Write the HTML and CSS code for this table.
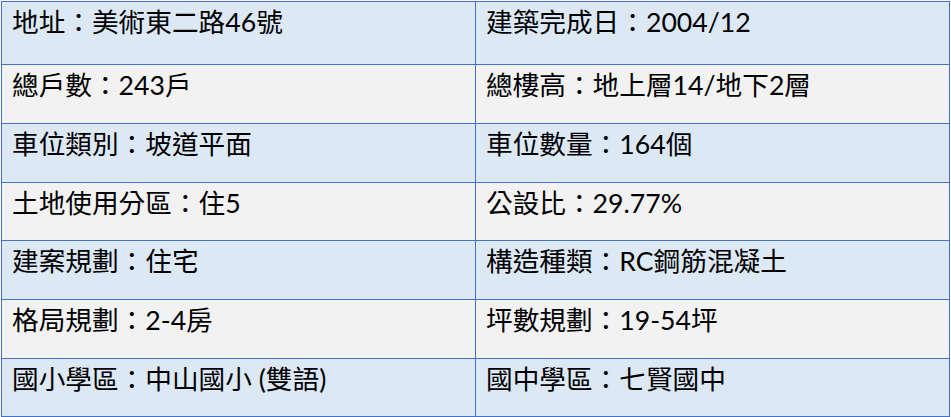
FILE: index.html
```html
<!DOCTYPE html>
<html lang="zh-Hant">
<head>
<meta charset="utf-8">
<title>建案資訊</title>
<link rel="stylesheet" href="styles.css">
</head>
<body>
<table class="info">
  <tr class="row row-blue row-first">
    <td class="cell">地址：美術東二路46號</td>
    <td class="cell">建築完成日：2004/12</td>
  </tr>
  <tr class="row row-gray">
    <td class="cell">總戶數：243戶</td>
    <td class="cell">總樓高：地上層14/地下2層</td>
  </tr>
  <tr class="row row-blue">
    <td class="cell">車位類別：坡道平面</td>
    <td class="cell">車位數量：164個</td>
  </tr>
  <tr class="row row-gray row-short">
    <td class="cell">土地使用分區：住5</td>
    <td class="cell">公設比：29.77%</td>
  </tr>
  <tr class="row row-blue">
    <td class="cell">建案規劃：住宅</td>
    <td class="cell">構造種類：RC鋼筋混凝土</td>
  </tr>
  <tr class="row row-gray">
    <td class="cell">格局規劃：2-4房</td>
    <td class="cell">坪數規劃：19-54坪</td>
  </tr>
  <tr class="row row-blue row-short">
    <td class="cell">國小學區：中山國小 (雙語)</td>
    <td class="cell">國中學區：七賢國中</td>
  </tr>
</table>
</body>
</html>
```

FILE: styles.css
```css
html, body {
  margin: 0;
  padding: 0;
  background: #ffffff;
}

body {
  padding: 1px 0 0 1px;
}

.info {
  border-collapse: collapse;
  width: 949px;
  table-layout: fixed;
  font-family: "Lato", "Noto Sans CJK TC", sans-serif;
  font-size: 26.67px;
  line-height: 1;
  color: #000000;
}

.row {
  height: 59px;
}

.row-first {
  height: 63px;
}

.row-short {
  height: 58px;
}

.row-blue {
  background: #dde8f5;
}

.row-gray {
  background: #f2f2f2;
}

.cell {
  border: 1px solid #4472c4;
  padding: 7px 0 0 10px;
  vertical-align: top;
  white-space: nowrap;
  box-sizing: border-box;
}

.cell:first-child {
  width: 474px;
}
```
